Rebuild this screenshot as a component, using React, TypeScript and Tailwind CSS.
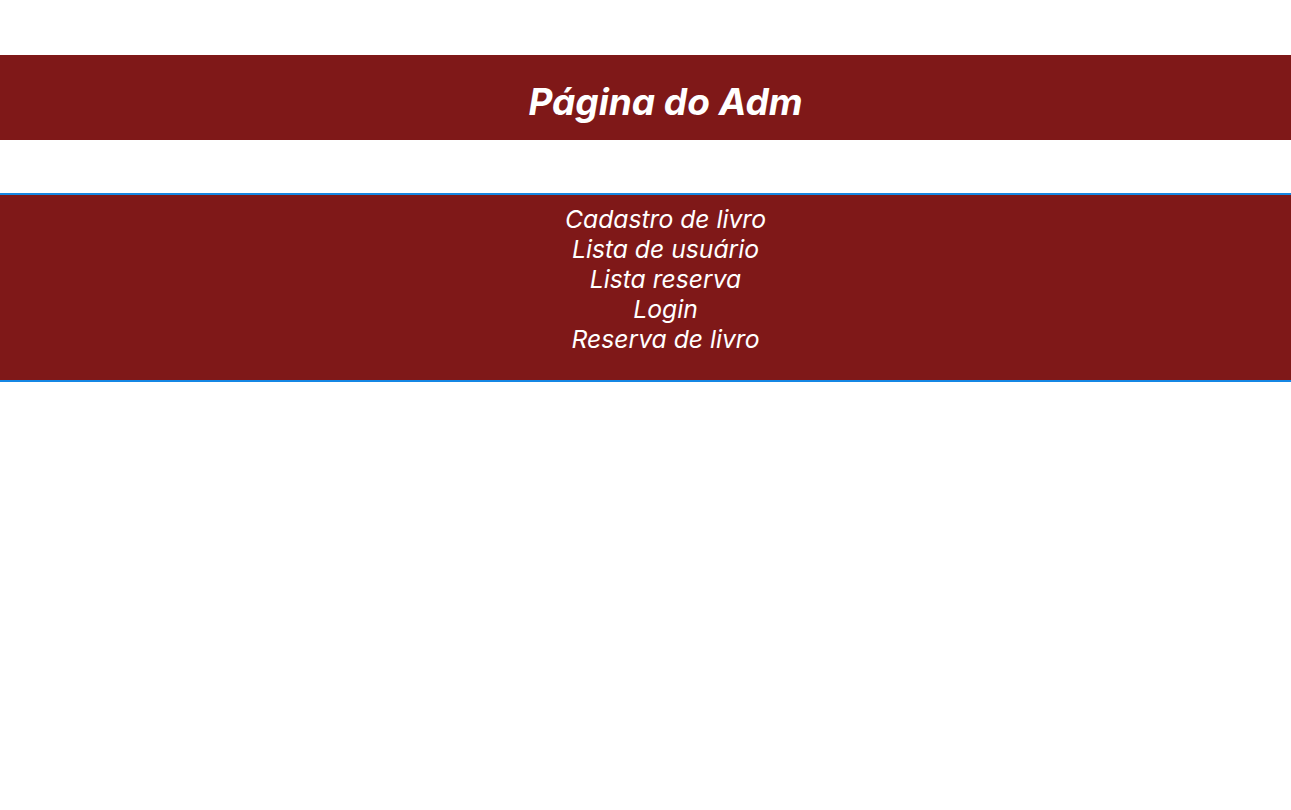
import React from 'react';

const links = ['Cadastro de livro', 'Lista de usuário', 'Lista reserva', 'Login', 'Reserva de livro'];

export default function App() {
  return (
    <div className="min-h-screen bg-white pt-[55px] font-['Inter',sans-serif] italic text-white">
      <header className="bg-[#7f1818] pl-10">
        <h1 className="h-[85px] flex items-center justify-center pt-[8px] text-[37px] font-bold">Página do Adm</h1>
      </header>

      <nav className="mt-[53px] border-y-2 border-[#1587e4] bg-[#7f1818] pt-[9px] pb-[26px]">
        <ul className="flex flex-col items-center pl-10">
          {links.map((l) => (
            <li key={l}>
              <a href="#" className="text-[24.7px] leading-[30px]">
                {l}
              </a>
            </li>
          ))}
        </ul>
      </nav>
    </div>
  );
}
